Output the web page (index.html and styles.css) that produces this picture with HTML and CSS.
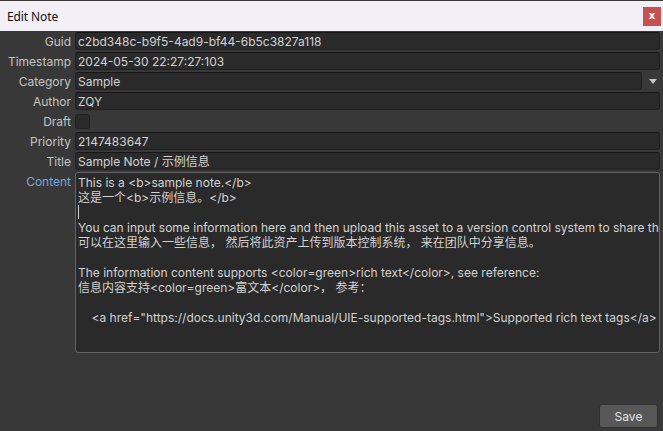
FILE: index.html
```html
<!DOCTYPE html>
<html>
<head>
<meta charset="utf-8">
<link rel="stylesheet" href="styles.css">
</head>
<body>
<div class="window">
  <div class="titlebar">
    <span class="title">Edit Note</span>
    <span class="close">x</span>
  </div>
  <div class="form">
    <div class="row"><label class="lbl">Guid</label><div class="field">c2bd348c-b9f5-4ad9-bf44-6b5c3827a118</div></div>
    <div class="row"><label class="lbl">Timestamp</label><div class="field">2024-05-30 22:27:27:103</div></div>
    <div class="row dropdown"><label class="lbl">Category</label><div class="field">Sample</div><span class="arrow"></span></div>
    <div class="row"><label class="lbl">Author</label><div class="field">ZQY</div></div>
    <div class="row"><label class="lbl">Draft</label><div class="check"></div></div>
    <div class="row"><label class="lbl">Priority</label><div class="field">2147483647</div></div>
    <div class="row"><label class="lbl">Title</label><div class="field">Sample Note / 示例信息</div></div>
    <div class="row content-row"><label class="lbl focus">Content</label><div class="area"><div class="line">This is a &lt;b&gt;sample note.&lt;/b&gt;</div><div class="line">这是一个&lt;b&gt;示例信息。&lt;/b&gt;</div><div class="line"><span class="caret"></span></div><div class="line">You can input some information here and then upload this asset to a version control system to share th</div><div class="line">可以在这里输入一些信息， 然后将此资产上传到版本控制系统， 来在团队中分享信息。</div><div class="line"> </div><div class="line">The information content supports &lt;color=green&gt;rich text&lt;/color&gt;, see reference:</div><div class="line">信息内容支持&lt;color=green&gt;富文本&lt;/color&gt;， 参考：</div><div class="line"> </div><div class="line">    &lt;a href="https://docs.unity3d.com/Manual/UIE-supported-tags.html"&gt;Supported rich text tags&lt;/a&gt;</div></div></div>
  </div>
  <div class="footer"><button class="save">Save</button></div>
</div>
</body>
</html>
```
FILE: styles.css
```css
html, body {
  margin: 0;
  padding: 0;
  width: 663px;
  height: 431px;
  overflow: hidden;
  background: #383838;
}
.window {
  width: 663px;
  height: 431px;
  display: flex;
  flex-direction: column;
  font-family: Inter, "Noto Sans CJK SC", sans-serif;
  font-size: 12px;
}
.titlebar {
  height: 30px;
  border-top: 1px solid #3a3a3a;
  background: #f3eff7;
  display: flex;
  align-items: center;
  justify-content: space-between;
  padding: 0 2px 0 7px;
}
.title {
  font-family: "Noto Sans", sans-serif;
  font-size: 12px;
  color: #111;
  letter-spacing: -0.1px;
}
.close {
  width: 18px;
  height: 19px;
  background: #c75050;
  color: #fff;
  font-family: "DejaVu Sans", sans-serif;
  font-weight: bold;
  font-size: 10px;
  display: flex;
  align-items: center;
  justify-content: center;
  line-height: 1;
}
.form {
  padding: 1px 3px 0 0;
  display: flex;
  flex-direction: column;
  gap: 2px;
}
.row {
  display: flex;
  align-items: center;
  height: 18px;
}
.lbl {
  width: 71px;
  flex: none;
  text-align: right;
  padding-right: 4px;
  color: #c4c4c4;
  line-height: 19px;
  height: 18px;
}
.lbl.focus {
  color: #7ba4dc;
}
.field {
  flex: 1;
  height: 16px;
  line-height: 17px;
  background: #2a2a2a;
  border: 1px solid #212121;
  border-top-color: #171717;
  border-radius: 3px;
  padding-left: 2px;
  color: #d2d2d2;
  white-space: nowrap;
  overflow: hidden;
}
.dropdown {
  margin-right: -3px;
}
.arrow {
  width: 21px;
  flex: none;
  display: flex;
  justify-content: center;
  align-items: center;
}
.arrow::before {
  content: "";
  border-left: 4px solid transparent;
  border-right: 4px solid transparent;
  border-top: 5px solid #c4c4c4;
  margin-top: 1px;
}
.check {
  width: 13px;
  height: 13px;
  background: #2a2a2a;
  border: 1px solid #212121;
  border-radius: 3px;
}
.content-row {
  height: 180px;
  align-items: flex-start;
}
.area {
  flex: 1;
  height: 176px;
  border: 1px solid #626262;
  border-radius: 3px;
  background: #2a2a2a;
  padding: 2px 0 1px 2px;
  color: #d2d2d2;
  overflow: hidden;
}
.line {
  white-space: pre;
  height: 15px;
  line-height: 15px;
}
.caret {
  display: inline-block;
  width: 1px;
  height: 14px;
  background: #d2d2d2;
  vertical-align: top;
}
.footer {
  margin-top: auto;
  display: flex;
  justify-content: flex-end;
  padding: 0 5px 3px 0;
}
.save {
  width: 59px;
  height: 24px;
  background: #585858;
  border: 1px solid #303030;
  border-radius: 3px;
  color: #e4e4e4;
  font-family: Inter, sans-serif;
  font-size: 12px;
  padding: 0;
}
```
